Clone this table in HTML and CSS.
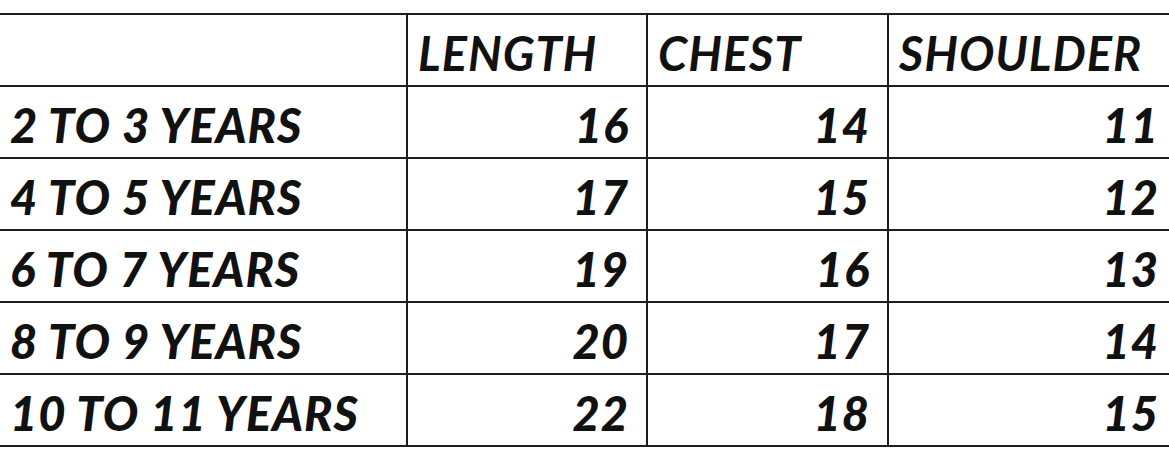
FILE: index.html
```html
<!DOCTYPE html>
<html>
<head>
<meta charset="utf-8">
<link rel="stylesheet" href="styles.css">
</head>
<body>
<div class="sheet">
<table class="size-table">
  <colgroup>
    <col class="c-age">
    <col class="c-len">
    <col class="c-chest">
    <col class="c-shoulder">
  </colgroup>
  <thead>
    <tr><th></th><th>LENGTH</th><th>CHEST</th><th>SHOULDER</th></tr>
  </thead>
  <tbody>
    <tr><td class="age">2 TO 3 YEARS</td><td>16</td><td>14</td><td>11</td></tr>
    <tr><td class="age">4 TO 5 YEARS</td><td>17</td><td>15</td><td>12</td></tr>
    <tr><td class="age">6 TO 7 YEARS</td><td>19</td><td>16</td><td>13</td></tr>
    <tr><td class="age">8 TO 9 YEARS</td><td>20</td><td>17</td><td>14</td></tr>
    <tr><td class="age">10 TO 11 YEARS</td><td>22</td><td>18</td><td>15</td></tr>
  </tbody>
</table>
</div>
</body>
</html>
```
FILE: styles.css
```css
html, body {
  margin: 0;
  padding: 0;
  background: #ffffff;
  overflow: hidden;
}
.sheet {
  padding-top: 13px;
  width: 1169px;
  height: 449px;
  overflow: hidden;
}
.size-table {
  border-collapse: collapse;
  table-layout: fixed;
  width: 1182px;
  margin-left: -6px;
  font-family: Lato, "Liberation Sans", sans-serif;
  font-weight: 900;
  font-style: italic;
  font-size: 47px;
  letter-spacing: 1px;
  color: #111111;
}
.c-age { width: 412px; }
.c-len { width: 240px; }
.c-chest { width: 241px; }
.c-shoulder { width: 289px; }
.size-table th,
.size-table td {
  border: 2px solid #1e1e1e;
  height: 64px;
  padding: 6px 0 0 0;
  line-height: 1;
  vertical-align: middle;
}
.size-table th {
  text-align: left;
  padding-left: 10px;
}
.size-table td {
  text-align: right;
  padding-right: 17px;
}
.size-table td.age {
  text-align: left;
  padding-left: 14px;
  padding-right: 0;
}
```
